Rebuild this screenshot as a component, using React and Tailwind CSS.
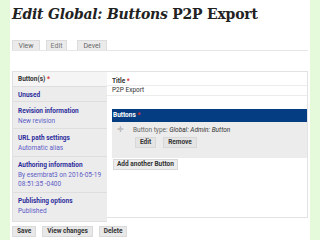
export default function App() {
  const sans = { fontFamily: "Roboto, 'Liberation Sans', sans-serif" };
  return (
    <div className="w-[320px] h-[240px] bg-[#e4fadb] flex overflow-hidden" style={sans}>
      <div className="ml-[10px] w-[300px] h-full bg-white flex flex-col pl-[2px]">
        <h1
          className="h-[25px] mt-[1px] text-[15.5px] leading-[25px] font-bold text-[#222] whitespace-nowrap font-stretch-condensed tracking-[-0.2px]"
          style={{ fontFamily: "'DejaVu Serif Condensed', 'DejaVu Serif', serif" }}
        >
          <span className="italic">Edit Global: Buttons</span> P2P Export
        </h1>

        <div className="mt-[14px] mr-[2px] flex items-end gap-[6px] border-b border-[#e6e6e6] h-[11px]">
          <span className="w-[28px] h-[10px] text-center bg-[#ebebeb] border border-b-0 border-[#dcdcdc] text-[7px] leading-[10px] text-[#666]">View</span>
          <span className="w-[21px] h-[10px] text-center bg-[#ebebeb] border border-b-0 border-[#dcdcdc] text-[7px] leading-[10px] text-[#777]">Edit</span>
          <span className="w-[30px] h-[10px] ml-[4px] text-center bg-[#ebebeb] border border-b-0 border-[#dcdcdc] text-[7px] leading-[10px] text-[#666]">Devel</span>
        </div>

        <div className="mt-[20px] mr-[2px] flex border-t border-[#e2e2e2]">
          <div className="w-[95px] h-[150px] bg-[#ececec] border-l border-b border-[#e0e0e0] text-[6.5px] leading-[9.5px]">
            <div className="h-[15px] bg-[#f5f5f5] px-[5px] pt-[3px] font-bold text-[#333] border-b border-[#dedede]">
              Button(s) <span className="text-[#e0302e]">*</span>
            </div>
            <div className="h-[15px] px-[5px] pt-[4px] font-bold text-[#2c2c9c] border-b border-[#dedede]">Unused</div>
            <div className="h-[27px] px-[5px] pt-[5px] border-b border-[#dedede]">
              <div className="font-bold text-[#2c2c9c]">Revision information</div>
              <div className="text-[#5c5cc7]">New revision</div>
            </div>
            <div className="h-[28px] px-[5px] pt-[5px] border-b border-[#dedede]">
              <div className="font-bold text-[#2c2c9c]">URL path settings</div>
              <div className="text-[#5c5cc7]">Automatic alias</div>
            </div>
            <div className="h-[36px] px-[5px] pt-[4px] border-b border-[#dedede]">
              <div className="font-bold text-[#2c2c9c]">Authoring information</div>
              <div className="text-[#5c5cc7]">By esembrat3 on 2016-05-19</div>
              <div className="text-[#5c5cc7]">08:51:35 -0400</div>
            </div>
            <div className="px-[5px] pt-[4px]">
              <div className="font-bold text-[#2c2c9c]">Publishing options</div>
              <div className="text-[#5c5cc7]">Published</div>
            </div>
          </div>

          <div className="flex-1 h-[146px] border-b border-r border-[#e2e2e2] text-[6.5px]">
            <div className="pl-[5px] pt-[5px] font-bold text-[#333] leading-[8px]">
              Title <span className="text-[#e0302e]">*</span>
            </div>
            <div className="h-[11px] border-y border-[#ececec] pl-[5px] text-[#333] leading-[9px]">P2P Export</div>
            <div className="ml-[5px] mt-[13px] h-[13px] bg-[#043d82] pl-[1px] text-white font-bold leading-[13px]">
              Buttons <span className="text-[#e0302e]">*</span>
            </div>
            <div className="ml-[5px] h-[36px] bg-[#ececec] pt-[4px]">
              <div className="flex items-center gap-[9px] pl-[5px] leading-[8px]">
                <span className="text-[#aaa] text-[8px]">✛</span>
                <span className="text-[#666]">
                  Button type: <span className="italic text-[#333]">Global: Admin: Button</span>
                </span>
              </div>
              <div className="mt-[3px] ml-[23px] flex gap-[7px]">
                <span className="h-[11px] px-[4px] bg-[#e4e4e4] border border-[#d8d8d8] font-bold text-[#333] leading-[9px]">Edit</span>
                <span className="h-[11px] px-[4px] bg-[#e4e4e4] border border-[#d8d8d8] font-bold text-[#333] leading-[9px]">Remove</span>
              </div>
            </div>
            <div className="ml-[6px] mt-[1px] w-fit h-[11px] px-[3px] bg-[#ececec] border border-[#d8d8d8] font-bold text-[#333] leading-[9px]">
              Add another Button
            </div>
          </div>
        </div>

        <div className="mt-[4px] flex gap-[6px] text-[6.5px]">
          <span className="h-[11px] px-[4px] bg-[#e8e8e8] border border-[#dadada] font-bold text-[#333] leading-[9px]">Save</span>
          <span className="h-[11px] px-[4px] bg-[#e8e8e8] border border-[#dadada] font-bold text-[#333] leading-[9px]">View changes</span>
          <span className="h-[11px] px-[4px] bg-[#e8e8e8] border border-[#dadada] font-bold text-[#333] leading-[9px]">Delete</span>
        </div>
      </div>
    </div>
  );
}
